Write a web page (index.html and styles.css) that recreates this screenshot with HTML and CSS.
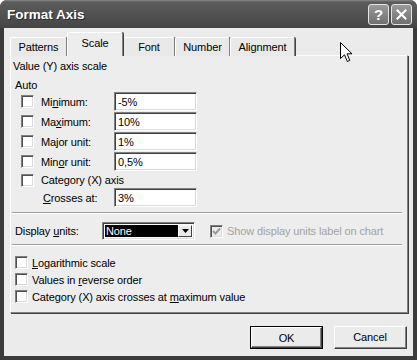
FILE: index.html
```html
<!DOCTYPE html>
<html>
<head>
<meta charset="utf-8">
<title>Format Axis</title>
<link rel="stylesheet" href="styles.css">
</head>
<body>
<div class="window">
  <div class="titlebar">
    <span class="title">Format Axis</span>
    <div class="tb-buttons">
      <span class="tb-btn">?</span>
      <span class="tb-btn"><svg width="11" height="11" viewBox="0 0 11 11"><path d="M1.5 1.5 L9.5 9.5 M9.5 1.5 L1.5 9.5" stroke="#fff" stroke-width="2" stroke-linecap="square"/></svg></span>
    </div>
  </div>
  <div class="frame">
    <div class="tabs">
      <div class="tab t-patterns">Patterns</div>
      <div class="tab t-scale active">Scale</div>
      <div class="tab t-font">Font</div>
      <div class="tab t-number">Number</div>
      <div class="tab t-align">Alignment</div>
    </div>
    <div class="panel">
      <div class="heading">Value (Y) axis scale</div>
      <div class="auto">Auto</div>
      <div class="scale">
        <div class="srow"><span class="cb"></span><span class="slabel">Mi<u>n</u>imum:</span><span class="field">-5%</span></div>
        <div class="srow"><span class="cb"></span><span class="slabel">Ma<u>x</u>imum:</span><span class="field">10%</span></div>
        <div class="srow"><span class="cb"></span><span class="slabel">Ma<u>j</u>or unit:</span><span class="field">1%</span></div>
        <div class="srow"><span class="cb"></span><span class="slabel">Min<u>o</u>r unit:</span><span class="field">0,5%</span></div>
        <div class="srow cat"><span class="cb"></span><span class="slabel">Category (X) axis</span></div>
        <div class="srow"><span class="cb-space"></span><span class="slabel indent"><u>C</u>rosses at:</span><span class="field">3%</span></div>
      </div>
      <div class="sep"></div>
      <div class="units">
        <span class="ulabel">Display <u>u</u>nits:</span>
        <span class="select"><span class="sel-value">None</span><span class="sel-btn"><svg width="7" height="4" viewBox="0 0 7 4"><path d="M0 0 H7 L3.5 4 Z" fill="#000"/></svg></span></span>
        <span class="cb checked disabled"><svg width="9" height="9" viewBox="0 0 9 9"><path d="M1 4 L3.5 6.5 L8 1.5" stroke="#9a9a9a" stroke-width="2" fill="none"/></svg></span>
        <span class="dis-text">Show display units label on chart</span>
      </div>
      <div class="sep"></div>
      <div class="checks">
        <div class="crow"><span class="cb"></span><span><u>L</u>ogarithmic scale</span></div>
        <div class="crow"><span class="cb"></span><span>Values in <u>r</u>everse order</span></div>
        <div class="crow"><span class="cb"></span><span>Category (X) axis crosses at <u>m</u>aximum value</span></div>
      </div>
    </div>
    <div class="buttons">
      <span class="btn default"><span class="btn-in">OK</span></span>
      <span class="btn"><span class="btn-in">Cancel</span></span>
    </div>
  </div>
  <svg class="cursor" width="13" height="21" viewBox="0 0 13 21"><path d="M0.5 0.5 L0.5 16.5 L4.5 12.8 L7.3 19.5 L9.8 18.4 L7.1 11.8 L12 11.8 Z" fill="#fff" stroke="#000" stroke-width="1" stroke-linejoin="miter"/></svg>
</div>
</body>
</html>
```

FILE: styles.css
```css
* { box-sizing: border-box; }
html, body { margin: 0; padding: 0; }
body {
  width: 417px;
  height: 360px;
  overflow: hidden;
  background: #fff;
  font-family: "Liberation Sans", Arial, sans-serif;
  font-size: 11px;
  letter-spacing: -0.12px;
  color: #000;
}
u { text-decoration: underline; text-underline-offset: 1px; }

.window {
  position: relative;
  width: 417px;
  height: 360px;
  display: flex;
  flex-direction: column;
  background: #3b3b3b;
  border-radius: 7px 7px 0 0;
  overflow: hidden;
}

.titlebar {
  flex: none;
  height: 28px;
  display: flex;
  align-items: center;
  padding: 1px 5px 0 7px;
  background: linear-gradient(#8a8a8a 0, #5c5c5c 2px, #545454 40%, #4a4a4a 80%, #444 100%);
}
.title {
  flex: 1;
  color: #fff;
  font-weight: bold;
  font-size: 13.5px;
  letter-spacing: 0;
  text-shadow: 1px 1px 0 #2a2a2a;
}
.tb-buttons { display: flex; gap: 2px; }
.tb-btn {
  width: 21px;
  height: 21px;
  border: 1px solid #e4e4e4;
  border-radius: 3px;
  background: linear-gradient(#9a9a9a, #707070);
  display: flex;
  align-items: center;
  justify-content: center;
  color: #fff;
  font-weight: bold;
  font-size: 15px;
}

.frame {
  flex: 1;
  margin: 0 4px 4px;
  background: #ebebeb;
  display: flex;
  flex-direction: column;
  padding: 5px 5px 0 6px;
}

.tabs {
  flex: none;
  height: 23px;
  display: flex;
  align-items: flex-end;
  position: relative;
  z-index: 1;
  margin-bottom: -1px;
}
.tab {
  height: 19px;
  display: flex;
  align-items: center;
  justify-content: center;
  background: #e9e9e9;
  border-top: 1px solid #fff;
  border-left: 1px solid #fff;
  border-right: 1px solid #808080;
  box-shadow: 1px 0 0 #404040;
  border-radius: 2px 2px 0 0;
}
.tab.active {
  height: 24px;
  background: #ededed;
  padding-bottom: 3px;
  position: relative;
  z-index: 2;
}
.t-patterns { width: 57px; }
.t-scale { width: 56px; }
.t-font { width: 52px; }
.t-number { width: 55px; }
.t-align { width: 65px; }

.panel {
  flex: none;
  width: 398px;
  height: 258px;
  background: #ededed;
  border-top: 1px solid #fff;
  border-left: 1px solid #fff;
  border-right: 1px solid #808080;
  border-bottom: 1px solid #808080;
  box-shadow: 1px 1px 0 #404040;
  display: flex;
  flex-direction: column;
}

.heading {
  line-height: 14px;
  margin: 3px 0 0 2px;
}
.auto {
  line-height: 13px;
  margin: 6px 0 0 4px;
}

.scale {
  display: flex;
  flex-direction: column;
  padding-left: 10px;
}
.srow {
  display: flex;
  align-items: center;
  height: 19px;
  margin-bottom: 1px;
}
.srow.cat { height: 16px; margin-bottom: 0; }
.slabel { width: 73px; margin-left: 7px; white-space: nowrap; }
.slabel.indent { padding-left: 2px; }
.cb-space { width: 13px; flex: none; }

.cb {
  flex: none;
  width: 13px;
  height: 13px;
  background: #fff;
  border-top: 1px solid #808080;
  border-left: 1px solid #808080;
  border-right: 1px solid #fff;
  border-bottom: 1px solid #fff;
  box-shadow: inset 1px 1px 0 #505050, inset -1px -1px 0 #dcdcdc;
  display: flex;
  align-items: center;
  justify-content: center;
}
.cb.disabled { background: #ececec; }

.field {
  width: 83px;
  height: 19px;
  background: #fff;
  border-top: 1px solid #808080;
  border-left: 1px solid #808080;
  border-right: 1px solid #fff;
  border-bottom: 1px solid #fff;
  box-shadow: inset 1px 1px 0 #404040, inset -1px -1px 0 #dcdcdc;
  padding: 0 3px;
  display: flex;
  align-items: center;
}

.sep {
  height: 2px;
  margin: 4px 5px 0 1px;
  border-top: 1px solid #a0a0a0;
  border-bottom: 1px solid #fff;
}

.units {
  display: flex;
  align-items: center;
  height: 18px;
  margin: 8px 0 0 0;
  padding-left: 4px;
}
.ulabel { width: 87px; }
.select {
  width: 93px;
  height: 18px;
  display: flex;
  background: #fff;
  border-top: 1px solid #808080;
  border-left: 1px solid #808080;
  border-right: 1px solid #fff;
  border-bottom: 1px solid #fff;
  box-shadow: inset 1px 1px 0 #404040, inset -1px -1px 0 #dcdcdc;
  padding: 2px;
}
.sel-value {
  flex: 1;
  background: #000;
  color: #fff;
  display: flex;
  align-items: center;
  padding-left: 1px;
}
.sel-btn {
  width: 14px;
  background: #e8e8e8;
  border-top: 1px solid #fff;
  border-left: 1px solid #fff;
  border-right: 1px solid #404040;
  border-bottom: 1px solid #404040;
  display: flex;
  align-items: center;
  justify-content: center;
}
.units .cb { margin-left: 15px; }
.dis-text { margin-left: 4px; color: #a3a3a3; }

.checks {
  display: flex;
  flex-direction: column;
  margin-top: 8px;
}
.crow {
  display: flex;
  align-items: center;
  height: 17px;
  padding-left: 4px;
  gap: 4px;
}

.buttons {
  display: flex;
  justify-content: flex-end;
  gap: 11px;
  margin-top: 13px;
  padding-right: 1px;
}
.btn {
  width: 73px;
  height: 23px;
  display: flex;
  background: #ebebeb;
  border-top: 1px solid #fff;
  border-left: 1px solid #fff;
  border-right: 1px solid #404040;
  border-bottom: 1px solid #404040;
}
.btn-in {
  flex: 1;
  display: flex;
  align-items: center;
  justify-content: center;
  border-right: 1px solid #808080;
  border-bottom: 1px solid #808080;
}
.btn.default {
  border: 1px solid #000;
}
.btn.default .btn-in {
  border-top: 1px solid #fff;
  border-left: 1px solid #fff;
  border-right: 1px solid #404040;
  border-bottom: 1px solid #404040;
  box-shadow: inset -1px -1px 0 #808080;
}

.cursor {
  position: absolute;
  left: 340px;
  top: 42px;
}
```
